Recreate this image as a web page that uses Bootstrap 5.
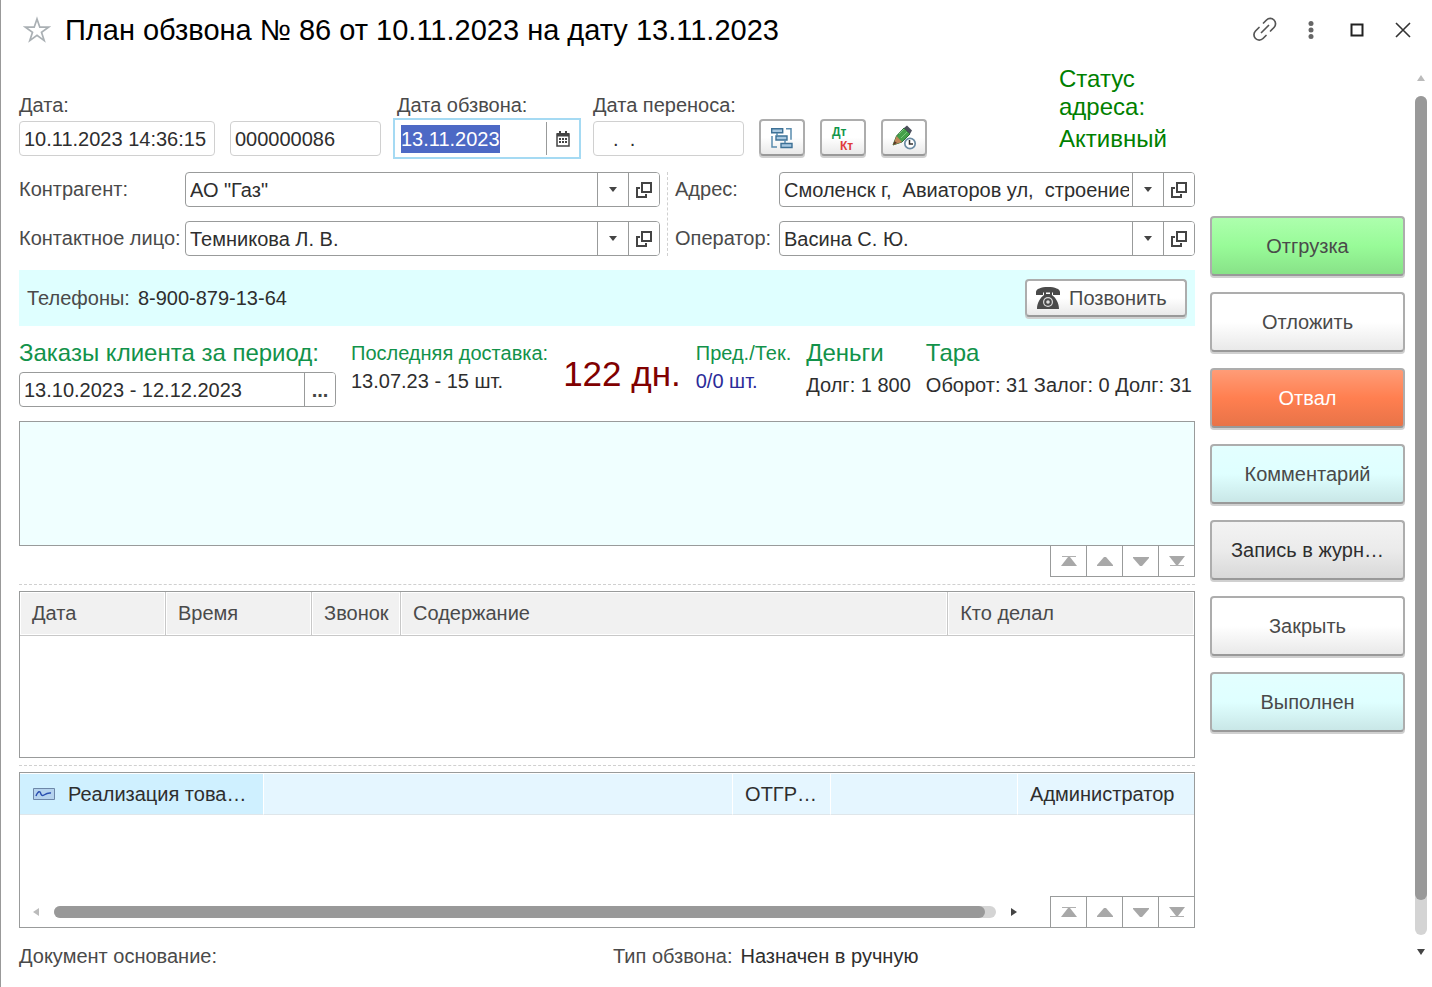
<!DOCTYPE html>
<html lang="ru">
<head>
<meta charset="utf-8">
<meta name="viewport" content="width=device-width, initial-scale=1">
<title>План обзвона</title>
<link href="https://cdn.jsdelivr.net/npm/bootstrap@5.3.0/dist/css/bootstrap.min.css" rel="stylesheet">
<style>
  :root { --line: #999b9b; --soft: #d0d0d0; --ink: #2e2e2e; --label: #4a4a4a; --accent: #12924a; }
  body { font-family: "Liberation Sans", Arial, sans-serif; font-size: 20px; line-height: 28px; color: var(--ink); background: #fff; }
  .window { min-height: 100vh; border-left: 1px solid #999; }
  .titlebar { height: 60px; padding: 0 6px 0 22px; }
  .titlebar h1 { font-size: 29px; line-height: 36px; color: #000; margin-left: 14px; }
  .tool { width: 46px; height: 36px; padding: 0; border: 0; background: none; display: flex; align-items: center; justify-content: center; }
  .form-area { padding: 0 15px 0 18px; min-width: 0; }
  .caption, label { color: var(--label); }
  .field { height: 35px; border: 1px solid var(--line); border-radius: 4px; display: flex; overflow: hidden; background: #fff; }
  .field input { flex: 1 1 0; min-width: 0; width: 100%; border: 0; outline: 0; padding: 0 3px 0 4px; color: var(--ink); background: transparent; }
  .field button { width: 31px; flex: none; padding: 0; border: 0; border-left: 1px solid var(--line); background: #fff; display: flex; align-items: center; justify-content: center; color: #444; }
  .field.quiet { border-color: var(--soft); }
  .field.current { height: 41px; margin: -3px 0; border: 2px solid #a5daf3; border-radius: 0; padding: 2px 0; }
  .field.current input { padding-left: 6px; }
  .field.current button { width: 33px; }
  .field input::selection { background: #4d69c5; color: #fff; }
  .w-stamp { width: 196px; } .w-short { width: 151px; } .w-pick { width: 188px; }
  .top-row { gap: 15px; height: 96px; }
  .top-row label { display: block; margin-bottom: 2px; }
  .top-row .pull { margin: 0 -3px; }
  .raised { border: 2px solid #adadad; border-bottom-color: #999; border-radius: 4px; box-shadow: 0 2px 0 #d0d0d0; background: linear-gradient(#fff 50%, #e9e9e9); color: var(--label); padding: 0; display: flex; align-items: center; justify-content: center; }
  .raised.icon-only { width: 46px; height: 37px; }
  .state { width: 136px; font-size: 24px; color: #008000; padding-bottom: 3px; }
  .pairs { display: grid; grid-template-columns: 166px 475fr 15px 104px 416fr; row-gap: 14px; margin-top: 16px; }
  .pairs label { line-height: 35px; white-space: nowrap; }
  .divider-v { grid-column: 3; grid-row: 1 / span 2; border-left: 1px dashed var(--soft); margin-left: 7px; }
  .phones { background: #dfffff; height: 56px; margin-top: 14px; padding: 0 8px; }
  .phones .raised { width: 162px; height: 38px; gap: 8px; justify-content: flex-start; padding-left: 8px; }
  .orders { gap: 15px; margin-top: 13px; height: 68px; white-space: nowrap; }
  .orders .head { font-size: 24px; color: var(--accent); }
  .orders .sub-head { color: var(--accent); }
  .days { font-size: 35px; line-height: 70px; color: #800000; }
  .current-count { color: #2b2b99; }
  .w-period { width: 317px; flex: none; }
  .memo { display: block; width: 100%; height: 125px; border: 1px solid var(--line); background: #f0ffff; resize: none; outline: 0; margin-top: 14px; border-radius: 0; }
  .pager button { width: 37px; height: 32px; margin-left: -1px; padding: 0; border: 1px solid var(--line); background: #fff; display: flex; align-items: center; justify-content: center; }
  .pager.under { margin-top: -1px; }
  .pager.inside { margin: 0 -1px -1px 0; }
  .divider-h { border-top: 1px dashed var(--soft); margin: 7px 0 6px; }
  .grid-box { border: 1px solid var(--line); }
  .grid-box table { width: 100%; table-layout: fixed; border-collapse: separate; border-spacing: 0; white-space: nowrap; }
  .log { height: 167px; } .docs { height: 156px; }
  .log th { font-weight: 400; color: var(--label); height: 44px; padding: 0 0 2px 12px; border-right: 1px solid #c8c8c8; border-bottom: 1px solid #c8c8c8; background: #f1f1f1; box-shadow: inset 0 0 0 1px #fff; }
  .log th:last-child { border-right: 0; }
  .docs td { height: 42px; padding: 0 12px; background: #e5f6ff; border-right: 1px solid #fff; border-bottom: 1px solid #dfe6ea; box-shadow: inset 0 1px 0 #fff; }
  .docs td:first-child { background: #cff0ff; }
  .docs td:last-child { border-right: 0; }
  .track { background: #d4d4d4; border-radius: 6px; }
  .thumb { background: #999; border-radius: 6px; }
  .h-scroll { height: 31px; padding: 0 34px 0 13px; gap: 15px; }
  .h-scroll .track, .h-scroll .thumb { height: 12px; }
  .foot { margin-top: 14px; }
  .foot > div { flex: 1 1 0; }
  .kind { padding-left: 12px; }
  .actions { width: 195px; margin-top: 156px; gap: 16px; }
  .actions .raised { height: 60px; width: 100%; }
  .actions .go { background: linear-gradient(#adffad, #98fb98 50%, #88e288); }
  .actions .refuse { background: linear-gradient(#ff9c77, #ff7f50 50%, #e87348); color: #fff; }
  .actions .aqua { background: linear-gradient(#e3ffff, #dfffff 50%, #c9e7e7); }
  .actions .pressed { background: linear-gradient(#f3f3f3, #ebebeb 50%, #d8d8d8); color: var(--ink); }
  .v-scroll { width: 12px; margin: 15px 5px 32px 10px; }
  .v-scroll .track, .v-scroll .thumb { width: 12px; }
  .v-scroll .track { margin: 15px 0 14px; }
  svg { display: block; flex: none; }
</style>
</head>
<body>
<svg width="0" height="0" class="position-absolute" aria-hidden="true">
  <symbol id="open" viewBox="0 0 16 16"><path d="M6 1h9v9H6zM4 6H1v9h9v-3" fill="none" stroke="currentColor" stroke-width="2"/></symbol>
  <symbol id="drop" viewBox="0 0 8 5"><path d="M0 0h8L4 5z" fill="currentColor"/></symbol>
  <symbol id="first" viewBox="0 0 16 10"><path d="M1 .5h14" stroke="#b0b0b0"/><path d="M0 10 7 1h2l7 9z" fill="#a8a8a8"/></symbol>
  <symbol id="up" viewBox="0 0 16 10"><path d="M0 10v-1l7-8h2l7 8v1z" fill="#a8a8a8"/></symbol>
  <symbol id="down" viewBox="0 0 16 10"><path d="M0 1h16v1L9 10H7L0 2z" fill="#a8a8a8"/></symbol>
  <symbol id="last" viewBox="0 0 16 10"><path d="M0 0h16L9 9H7z" fill="#a8a8a8"/><path d="M1 9.500h14" stroke="#b0b0b0"/></symbol>
</svg>
<div class="window d-flex flex-column">
  <header class="titlebar d-flex align-items-center">
    <svg width="28" height="28" viewBox="0 0 28 28" fill="none" stroke="#aab0b4" stroke-width="1.700"><path d="m14 3 2.800 8.200h8.700l-7 5.100 2.700 8.300-7.200-5.200-7.200 5.200 2.700-8.300-7-5.100h8.700z"/></svg>
    <h1 class="mb-0 fw-normal flex-grow-1">План обзвона № 86 от 10.11.2023 на дату 13.11.2023</h1>
    <button class="tool" aria-label="Ссылка"><svg width="26" height="26" viewBox="0 0 26 26" fill="none" stroke="#555" stroke-width="1.700" stroke-linecap="round"><path d="m9.500 15.500 7-7M11.500 6l3-3a5 5 0 0 1 7.500 7.500l-3.500 3.500M7 10.500 3.500 14a5 5 0 0 0 7.500 7.500l3-3"/></svg></button>
    <button class="tool" aria-label="Ещё"><svg width="6" height="18" viewBox="0 0 6 18" fill="#666"><circle cx="3" cy="2.500" r="2.500"/><circle cx="3" cy="9" r="2.500"/><circle cx="3" cy="15.500" r="2.500"/></svg></button>
    <button class="tool" aria-label="Развернуть"><svg width="14" height="14" viewBox="0 0 14 14"><path d="M1.500 1.500h11v11h-11z" fill="none" stroke="#222" stroke-width="2"/></svg></button>
    <button class="tool" aria-label="Закрыть окно"><svg width="16" height="16" viewBox="0 0 16 16"><path d="m1 1 14 14M15 1 1 15" stroke="#333" stroke-width="1.600"/></svg></button>
  </header>

  <div class="d-flex flex-grow-1">
    <main class="form-area flex-grow-1">
      <div class="top-row d-flex align-items-end">
        <div><label for="stamp">Дата:</label><div class="field quiet w-stamp"><input id="stamp" value="10.11.2023 14:36:15"></div></div>
        <div class="field quiet w-short"><input aria-label="Номер" value="000000086"></div>
        <div class="pull w-pick"><label for="callDate" class="ps-1">Дата обзвона:</label>
          <div class="d-flow-root"><div class="field current"><input id="callDate" value="13.11.2023"><button aria-label="Календарь"><svg width="14" height="16" viewBox="0 0 14 16"><path d="M1 3h12v12H1z" fill="none" stroke="#444" stroke-width="1.500"/><path d="M1 2h12v3.500H1zM3 0h2v3H3zM9 0h2v3H9zM3 7h2v2H3zM6 7h2v2H6zM9 7h2v2H9zM3 10h2v2H3zM6 10h2v2H6zM9 10h2v2H9z" fill="#444"/></svg></button></div></div>
        </div>
        <div><label for="moveDate">Дата переноса:</label><div class="field quiet w-short"><input id="moveDate" class="ps-2" value="  .  ."></div></div>
        <button class="raised icon-only" aria-label="Структура подчиненности"><svg width="24" height="24" viewBox="0 0 24 24"><g fill="#a9c8e0" stroke="#3d7196" stroke-width="1.400"><path d="M1.700 2.700h11v4h-11zM6 10h11v4H6zM11 17.500h11v4H11z"/></g><path d="M16 2.700h5v11M2 10v11h5M7 7v3M15 14v3" fill="none" stroke="#5a8cae" stroke-width="1.500"/></svg></button>
        <button class="raised icon-only" aria-label="Проводки"><svg width="28" height="30" viewBox="0 0 28 30" font-family="Liberation Sans, sans-serif" font-size="12" font-weight="700"><text x="3" y="13" fill="#12964a">Дт</text><text x="11" y="27" fill="#e03c3c">Кт</text></svg></button>
        <button class="raised icon-only" aria-label="Отложенная запись"><svg width="26" height="26" viewBox="0 0 26 26"><path d="m2 20 3.500-9L13 3l6 6-8 8z" fill="#45a049" stroke="#2c6e36"/><path d="m13 3 3-2.500 5 5L19 9z" fill="#4c4f5c"/><path d="m2 20 3.500-9 5.500 6z" fill="#c0875a"/><path d="m2 20 1.500-4L6 18z" fill="#5a3a28"/><path d="m8 9 5-5M10 13l6-6" stroke="#79c77c"/><circle cx="19" cy="18.500" r="5.200" fill="#fff" stroke="#6b8ba3" stroke-width="1.700"/><path d="M18.500 15v4H22" fill="none" stroke="#333" stroke-width="1.500"/></svg></button>
        <div class="state ms-auto"><div>Статус адреса:</div><div class="pt-1">Активный</div></div>
      </div>

      <div class="pairs">
        <label for="client">Контрагент:</label>
        <div class="field"><input id="client" value='АО "Газ"'><button aria-label="Выбрать"><svg width="8" height="5"><use href="#drop"/></svg></button><button aria-label="Открыть"><svg width="16" height="16"><use href="#open"/></svg></button></div>
        <div class="divider-v"></div>
        <label for="addr">Адрес:</label>
        <div class="field"><input id="addr" value="Смоленск г,  Авиаторов ул,  строение"><button aria-label="Выбрать"><svg width="8" height="5"><use href="#drop"/></svg></button><button aria-label="Открыть"><svg width="16" height="16"><use href="#open"/></svg></button></div>
        <label for="person">Контактное лицо:</label>
        <div class="field"><input id="person" value="Темникова Л. В."><button aria-label="Выбрать"><svg width="8" height="5"><use href="#drop"/></svg></button><button aria-label="Открыть"><svg width="16" height="16"><use href="#open"/></svg></button></div>
        <label for="oper">Оператор:</label>
        <div class="field"><input id="oper" value="Васина С. Ю."><button aria-label="Выбрать"><svg width="8" height="5"><use href="#drop"/></svg></button><button aria-label="Открыть"><svg width="16" height="16"><use href="#open"/></svg></button></div>
      </div>

      <div class="phones d-flex align-items-center">
        <span class="caption me-2">Телефоны:</span><span class="flex-grow-1">8-900-879-13-64</span>
        <button class="raised"><svg width="26" height="24" viewBox="0 0 26 24"><path d="M1 9V6c0-3 5-5 12-5s12 2 12 5v3h-7V6.500H8V9z" fill="#4a4a4a"/><path d="M9 5h2v3h4V5h2v4c4 3 7 8 7 14H2C2 17 5 12 9 9z" fill="#4a4a4a"/><circle cx="13" cy="16" r="5" fill="#ddd"/><circle cx="13" cy="16" r="3.800" fill="#4a4a4a"/><circle cx="13" cy="16" r="1.800" fill="#ddd"/></svg>Позвонить</button>
      </div>

      <div class="orders d-flex">
        <div class="w-period"><label for="period" class="head">Заказы клиента за период:</label><div class="field mt-1"><input id="period" value="13.10.2023 - 12.12.2023"><button aria-label="Выбрать период" class="fw-bold">...</button></div></div>
        <div><div class="sub-head">Последняя доставка:</div><div>13.07.23 - 15 шт.</div></div>
        <div class="days">122 дн.</div>
        <div><div class="sub-head">Пред./Тек.</div><div class="current-count">0/0 шт.</div></div>
        <div><div class="head">Деньги</div><div class="pt-1">Долг: 1 800</div></div>
        <div><div class="head">Тара</div><div class="pt-1">Оборот: 31 Залог: 0 Долг: 31</div></div>
      </div>

      <textarea class="memo" aria-label="Заказы"></textarea>
      <div class="pager under d-flex justify-content-end">
        <button aria-label="В начало"><svg width="16" height="10"><use href="#first"/></svg></button><button aria-label="Выше"><svg width="16" height="10"><use href="#up"/></svg></button><button aria-label="Ниже"><svg width="16" height="10"><use href="#down"/></svg></button><button aria-label="В конец"><svg width="16" height="10"><use href="#last"/></svg></button>
      </div>
      <div class="divider-h"></div>

      <div class="grid-box log">
        <table>
          <colgroup><col style="width:12.440%"><col style="width:12.440%"><col style="width:7.580%"><col style="width:46.600%"><col></colgroup>
          <thead><tr><th>Дата</th><th>Время</th><th>Звонок</th><th>Содержание</th><th>Кто делал</th></tr></thead>
        </table>
      </div>
      <div class="divider-h"></div>

      <div class="grid-box docs d-flex flex-column">
        <table>
          <colgroup><col style="width:20.800%"><col style="width:39.940%"><col style="width:8.350%"><col style="width:15.930%"><col></colgroup>
          <tbody><tr><td><div class="d-flex align-items-center"><svg class="me-2" width="24" height="14" viewBox="0 0 24 14"><path d="M1.500 1.500h21v11h-21z" fill="#b5d3ee" stroke="#6d87a8"/><path d="M4 9c1-3 3-5 4-4s1 5 4 3 4-2.500 7-2" fill="none" stroke="#2a4fb0" stroke-width="1.500"/></svg><span class="ps-1">Реализация това…</span></div></td><td></td><td>ОТГР…</td><td></td><td>Администратор</td></tr></tbody>
        </table>
        <div class="d-flex mt-auto">
          <div class="h-scroll d-flex align-items-center flex-grow-1"><svg width="6" height="8"><path d="M6 0v8L0 4z" fill="#bbb"/></svg><div class="track flex-grow-1"><div class="thumb" style="width:98.800%"></div></div><svg width="6" height="8"><path d="M0 0v8l6-4z" fill="#444"/></svg></div>
          <div class="pager inside d-flex">
            <button aria-label="В начало"><svg width="16" height="10"><use href="#first"/></svg></button><button aria-label="Выше"><svg width="16" height="10"><use href="#up"/></svg></button><button aria-label="Ниже"><svg width="16" height="10"><use href="#down"/></svg></button><button aria-label="В конец"><svg width="16" height="10"><use href="#last"/></svg></button>
          </div>
        </div>
      </div>

      <div class="foot d-flex">
        <div class="caption">Документ основание:</div>
        <div class="kind"><span class="caption me-2">Тип обзвона:</span>Назначен в ручную</div>
      </div>
    </main>

    <aside class="actions d-flex flex-column flex-shrink-0">
      <button class="raised go">Отгрузка</button>
      <button class="raised">Отложить</button>
      <button class="raised refuse">Отвал</button>
      <button class="raised aqua">Комментарий</button>
      <button class="raised pressed">Запись в журн…</button>
      <button class="raised">Закрыть</button>
      <button class="raised aqua">Выполнен</button>
    </aside>
    <div class="v-scroll d-flex flex-column align-items-center flex-shrink-0">
      <svg width="8" height="6"><path d="M0 6h8L4 0z" fill="#bbb"/></svg>
      <div class="track flex-grow-1 d-flex flex-column"><div class="thumb" style="height:95.800%"></div></div>
      <svg width="8" height="6"><path d="M0 0h8L4 6z" fill="#444"/></svg>
    </div>
  </div>
</div>
<script src="https://cdn.jsdelivr.net/npm/bootstrap@5.3.0/dist/js/bootstrap.bundle.min.js"></script>
<script>
  const callDate = document.getElementById('callDate');
  callDate.focus();
  callDate.select();
</script>
</body>
</html>
